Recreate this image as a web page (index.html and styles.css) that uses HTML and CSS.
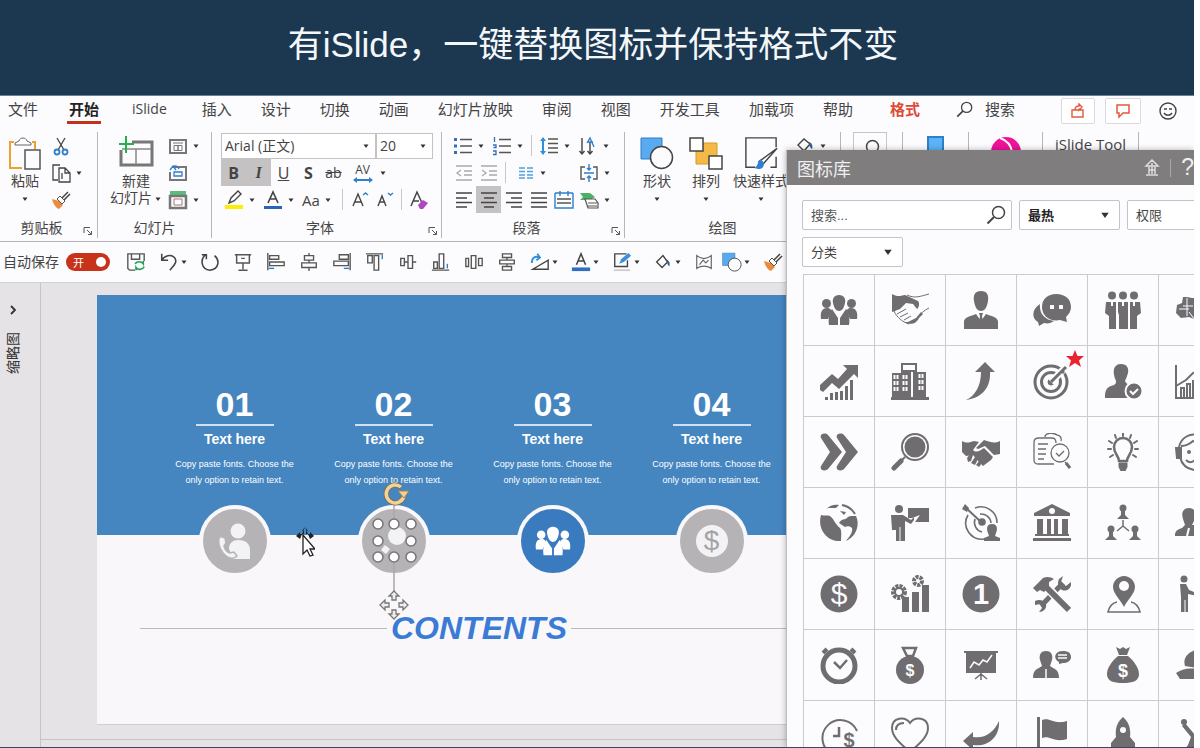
FILE: index.html
```html
<!DOCTYPE html>
<html lang="zh-CN">
<head>
<meta charset="utf-8">
<title>iSlide 图标库</title>
<link rel="stylesheet" href="styles.css">
</head>
<body>
<svg class="sprite" aria-hidden="true">
  <symbol id="caret" viewBox="0 0 8 8"><path d="M1.5 2.5h5L4 6z" fill="#333"/></symbol>
  <symbol id="launcher" viewBox="0 0 10 10"><path d="M1 7V1.500h6M4 4l4 4M8.500 5v3.500H5" fill="none" stroke="#555"/></symbol>
  <symbol id="lens" viewBox="0 0 20 20"><circle cx="12.500" cy="7.500" r="6" fill="none" stroke="currentColor" stroke-width="1.500"/><path d="M8 12l-6.500 6.500" stroke="currentColor" stroke-width="2"/></symbol>
  <symbol id="brush" viewBox="0 0 20 20"><path d="M1 9l7 2 4 4-4 4c-3-1-6-5-7-10z" fill="#ee8a3c"/><path d="M6 9l3-3 5 5-3 3z" fill="#fff" stroke="#555"/><path d="M11 8l6-6M13 10l6-6" stroke="#444" stroke-width="1.500"/></symbol>
  <symbol id="people" viewBox="0 0 38 38"><g fill="currentColor"><circle cx="6.500" cy="12.500" r="4.500"/><circle cx="31.500" cy="12.500" r="4.500"/><path d="M1 28c-1-7 1-11 6-11 3 0 5 2 4 4l-3 7zM37 28c1-7-1-11-6-11-3 0-5 2-4 4l3 7z"/><path d="M19 4c5 0 7 4 6 8-1 5-3 8-6 8s-5-3-6-8c-1-4 1-8 6-8z"/><path d="M12 18l6 9v7H9c-1-6 0-12 3-16zM26 18l-6 9v7h9c1-6 0-12-3-16z"/></g></symbol>
  <symbol id="shapes" viewBox="0 0 34 34"><path d="M1 2h21v21H1z" fill="#5aaaf0" stroke="#2f7fc9"/><circle cx="21.500" cy="21.500" r="11" fill="#fcfbfd" stroke="#444" stroke-width="1.500"/></symbol>
  <symbol id="bag" viewBox="0 0 38 38"><path d="M12 1l4 2 3-2 3 2 4-2-3 8h-8zM14 10h10c6 5 11 12 11 18 0 7-6 9-16 9S3 35 3 28c0-6 5-13 11-18z" fill="currentColor"/><path d="M14 9.500h10" stroke="#fcfbfe"/><text x="19" y="31" font-size="18" font-weight="700" text-anchor="middle" fill="#fcfbfe">$</text></symbol>
</svg>

<div class="frame">
  <header class="banner"><h1>有iSlide，一键替换图标并保持格式不变</h1></header>

  <div class="tabs">
    <nav class="tab-list">
      <button class="tab">文件</button>
      <button class="tab tab-active">开始</button>
      <button class="tab tab-latin">iSlide</button>
      <button class="tab">插入</button>
      <button class="tab">设计</button>
      <button class="tab">切换</button>
      <button class="tab">动画</button>
      <button class="tab">幻灯片放映</button>
      <button class="tab">审阅</button>
      <button class="tab">视图</button>
      <button class="tab">开发工具</button>
      <button class="tab">加载项</button>
      <button class="tab">帮助</button>
      <button class="tab tab-context">格式</button>
    </nav>
    <label class="tell-me"><svg width="17" height="17"><use href="#lens"/></svg><input type="text" placeholder="搜索" aria-label="搜索"></label>
    <div class="tab-tools">
      <button class="tool-box" aria-label="共享"><svg width="16" height="16" viewBox="0 0 16 16" fill="none" stroke="#e2583e" stroke-width="1.400"><path d="M2 7h11v7H2zM5 7c0-3 1-4 4-4V1l3 3-3 3V5.500"/></svg></button>
      <button class="tool-box tool-wide" aria-label="批注"><svg width="16" height="16" viewBox="0 0 16 16" fill="none" stroke="#e2583e" stroke-width="1.500"><path d="M2 2h12v8H8l-4 4v-4H2z"/></svg></button>
      <button class="smile" aria-label="反馈"><svg width="18" height="18" viewBox="0 0 18 18" fill="none" stroke="#444" stroke-width="1.400"><circle cx="9" cy="9" r="8"/><path d="M5 7h3M10 7h3M5 11c2 3 6 3 8 0"/></svg></button>
    </div>
  </div>

  <div class="ribbon">
    <section class="group g-clip">
      <div class="group-body">
        <button class="big big-paste"><svg width="34" height="34" viewBox="0 0 34 34" fill="none"><path d="M6 6H2v26h12M24 6h3v7" stroke="#f0a030" stroke-width="2"/><path d="M7 7l4-2c1-4 7-4 8 0l4 2v2H7z" stroke="#666" fill="#fff"/><path d="M17 14h15v19H17z" stroke="#555" stroke-width="1.500" fill="#fcfbfd"/></svg><span>粘贴</span><svg class="caret"><use href="#caret"/></svg></button>
        <div class="stack">
          <button class="small" aria-label="剪切"><svg viewBox="0 0 20 20" fill="none"><path d="M6 2l7 12M14 2L7 14" stroke="#444" stroke-width="1.300"/><circle cx="6" cy="16" r="2.500" stroke="#2f7fc9" stroke-width="1.800"/><circle cx="14" cy="16" r="2.500" stroke="#2f7fc9" stroke-width="1.800"/></svg></button>
          <button class="small" aria-label="复制"><svg viewBox="0 0 20 20" fill="none" stroke="#444" stroke-width="1.300"><path d="M7 17H2V2h7M8 5h6l5 5v9H8zM14 5v5h5M11 10v6"/></svg><svg class="caret"><use href="#caret"/></svg></button>
          <button class="small" aria-label="格式刷"><svg><use href="#brush"/></svg></button>
        </div>
      </div>
      <div class="group-foot"><span>剪贴板</span><svg class="launcher"><use href="#launcher"/></svg></div>
    </section>

    <section class="group g-slide">
      <div class="group-body">
        <button class="big big-new"><svg width="36" height="34" viewBox="0 0 36 34" fill="none"><path d="M14 6h20v23H3V14" stroke="#777" stroke-width="3"/><path d="M4 13h29M18 13v15" stroke="#888" stroke-width="1.500"/><path d="M8 0v17M1 8h15" stroke="#22b14c" stroke-width="2"/></svg><span>新建</span><span class="big-line">幻灯片<svg class="caret"><use href="#caret"/></svg></span></button>
        <div class="stack">
          <button class="small" aria-label="版式"><svg viewBox="0 0 20 20" fill="none"><path d="M2 4h16v13H2z" stroke="#777" stroke-width="2"/><path d="M5 7h10M6 9.500h4v5H6zM10 9.500h4v5h-4z" stroke="#777"/></svg><svg class="caret"><use href="#caret"/></svg></button>
          <button class="small" aria-label="重置"><svg viewBox="0 0 20 20" fill="none"><path d="M4 4h14v13H2V9" stroke="#777" stroke-width="2"/><path d="M6 13V9h8v4zM2 7l3-4 3 4M5 4c2-2 5-1 6 2" stroke="#2f7fc9" stroke-width="1.300"/></svg></button>
          <button class="small" aria-label="节"><svg viewBox="0 0 20 20" fill="none"><path d="M2 1h16v4H2z" fill="#5bbd7c"/><path d="M2 6h16v12H2z" stroke="#777" stroke-width="2.500"/><path d="M6 9h8v6H6z" stroke="#a76" fill="#fff"/></svg><svg class="caret"><use href="#caret"/></svg></button>
        </div>
      </div>
      <div class="group-foot"><span>幻灯片</span></div>
    </section>

    <section class="group g-font">
      <div class="group-body rows">
        <div class="row combo-row">
          <label class="combo combo-name"><select aria-label="字体"><option>Arial (正文)</option></select><svg class="caret"><use href="#caret"/></svg></label>
          <label class="combo combo-size"><select aria-label="字号"><option>20</option></select><svg class="caret"><use href="#caret"/></svg></label>
        </div>
        <div class="row">
          <button class="cell pressed"><b>B</b></button>
          <button class="cell pressed"><i class="serif">I</i></button>
          <button class="cell"><u>U</u></button>
          <button class="cell"><b>S</b></button>
          <button class="cell"><s>ab</s></button>
          <button class="cell spacing" aria-label="字符间距"><span>AV</span><svg width="20" height="6" viewBox="0 0 20 6"><path d="M0 3l4-3v2h12V0l4 3-4 3V4H4v2z" fill="#2f7fc9"/></svg></button><svg class="caret"><use href="#caret"/></svg>
        </div>
        <div class="row">
          <button class="cell cell-dd" aria-label="突出显示"><svg viewBox="0 0 20 20"><path d="M1 15h18v4H1z" fill="#ffee00"/><path d="M5 13l2-5 7-7 3 3-7 7-5 2z" fill="#fff" stroke="#444" stroke-width="1.400"/></svg><svg class="caret"><use href="#caret"/></svg></button>
          <button class="cell cell-dd" aria-label="字体颜色"><svg viewBox="0 0 20 20"><path d="M1 16h18v3H1z" fill="#2b63b8"/><path d="M5 13l5-11 5 11M7 9h6" fill="none" stroke="#444" stroke-width="1.600"/></svg><svg class="caret"><use href="#caret"/></svg></button>
          <button class="cell cell-dd"><span>Aa</span><svg class="caret"><use href="#caret"/></svg></button>
          <i class="rule"></i>
          <button class="cell" aria-label="增大字号"><svg viewBox="0 0 20 20" fill="none"><path d="M3 16L8 4l5 12M5 12h6" stroke="#444" stroke-width="1.400"/><path d="M13 5l2.500-2L18 5" stroke="#2f7fc9" stroke-width="1.400"/></svg></button>
          <button class="cell" aria-label="减小字号"><svg viewBox="0 0 20 20" fill="none"><path d="M3 16l4-10 4 10M5 12h5" stroke="#444" stroke-width="1.400"/><path d="M13 3l2.500 2L18 3" stroke="#2f7fc9" stroke-width="1.400"/></svg></button>
          <i class="rule"></i>
          <button class="cell" aria-label="清除格式"><svg viewBox="0 0 20 20" fill="none"><path d="M2 16L8 2l5 11M4 11h6" stroke="#444" stroke-width="1.500"/><path d="M9 15l5-5 5 3-5 6h-3z" fill="#b146c2"/></svg></button>
        </div>
      </div>
      <div class="group-foot"><span>字体</span><svg class="launcher"><use href="#launcher"/></svg></div>
    </section>

    <section class="group g-para">
      <div class="group-body rows">
        <div class="row row-gap">
          <button class="small" aria-label="项目符号"><svg viewBox="0 0 20 20"><path d="M1 2h3v3H1zM1 8.500h3v3H1zM1 15h3v3H1z" fill="#2f6fc0"/><path d="M7 3.500h12M7 10h12M7 16.500h12" stroke="#555" stroke-width="1.400"/></svg><svg class="caret"><use href="#caret"/></svg></button>
          <button class="small" aria-label="编号"><svg viewBox="0 0 20 20"><path d="M2.500 1v5M1 9h3v2.500H1.500M1 15h3v3.500H1" fill="none" stroke="#2f6fc0" stroke-width="1.300"/><path d="M7 3.500h12M7 10h12M7 16.500h12" stroke="#555" stroke-width="1.400"/></svg><svg class="caret"><use href="#caret"/></svg></button>
          <i class="rule"></i>
          <button class="small" aria-label="行距"><svg viewBox="0 0 20 20"><path d="M4 1L1 5h2v10H1l3 4 3-4H5V5h2z" fill="#2f8fd8"/><path d="M9 3h10M9 7.500h10M9 12h10M9 16.500h10" stroke="#555" stroke-width="1.300"/></svg><svg class="caret"><use href="#caret"/></svg></button>
          <button class="small" aria-label="文字方向"><svg viewBox="0 0 20 20" fill="none"><path d="M4 2v16M1.500 15L4 18l2.500-3M12 6v12M9.500 15l2.500 3 2.500-3" stroke="#444" stroke-width="1.400"/><path d="M9 7l3-5 4 9M10 6h5" stroke="#2f7fc9" stroke-width="1.300"/></svg><svg class="caret"><use href="#caret"/></svg></button>
        </div>
        <div class="row">
          <button class="cell" aria-label="减少缩进"><svg viewBox="0 0 20 20" fill="none" stroke="#aaa" stroke-width="1.300"><path d="M2 3h16M10 8h8M10 12h8M2 17h16M7 7l-4 3 4 3"/></svg></button>
          <button class="cell" aria-label="增加缩进"><svg viewBox="0 0 20 20" fill="none" stroke="#aaa" stroke-width="1.300"><path d="M2 3h16M10 8h8M10 12h8M2 17h16M3 7l4 3-4 3"/></svg></button>
          <i class="rule"></i>
          <button class="small columns" aria-label="分栏"><svg viewBox="0 0 20 20" stroke="#4da3dc" stroke-width="1.400"><path d="M4 5h6M4 8.500h6M4 12h6M4 15h6M12 5h6M12 8.500h6M12 12h6M12 15h6"/></svg><svg class="caret"><use href="#caret"/></svg></button>
          <button class="small last" aria-label="对齐文本"><svg viewBox="0 0 20 20" fill="none"><path d="M6 4H2v12h4M14 4h4v12h-4" stroke="#555" stroke-width="1.400"/><path d="M5 10h10M10 1v6M10 19v-6M8 5l2 2 2-2M8 15l2-2 2 2" stroke="#2f7fc9" stroke-width="1.400"/></svg><svg class="caret"><use href="#caret"/></svg></button>
        </div>
        <div class="row">
          <button class="cell" aria-label="左对齐"><svg viewBox="0 0 20 20" stroke="#444" stroke-width="1.400"><path d="M2 3h16M2 8h11M2 12.500h16M2 17h11"/></svg></button>
          <button class="cell pressed" aria-label="居中"><svg viewBox="0 0 20 20" stroke="#444" stroke-width="1.400"><path d="M2 3h16M5 8h10M2 12.500h16M5 17h10"/></svg></button>
          <button class="cell" aria-label="右对齐"><svg viewBox="0 0 20 20" stroke="#444" stroke-width="1.400"><path d="M2 3h16M7 8h11M2 12.500h16M7 17h11"/></svg></button>
          <button class="cell" aria-label="两端对齐"><svg viewBox="0 0 20 20" stroke="#444" stroke-width="1.400"><path d="M2 3h16M2 8h16M2 12.500h16M2 17h16"/></svg></button>
          <button class="cell" aria-label="分散对齐"><svg viewBox="0 0 20 20" fill="none"><path d="M1 3h18M6 1v5M14 1v5M1 3v15h18V3" stroke="#2f7fc9" stroke-width="1.400"/><path d="M3 9h14M3 13h14" stroke="#555" stroke-width="1.300"/></svg></button>
          <button class="small last" aria-label="转换为 SmartArt"><svg viewBox="0 0 20 20" fill="none"><path d="M1 3h10l5 4-5 3H1l3-3z" fill="#4cb06a"/><path d="M6 9h10l3 4v5H9zM9 13h9M9 16h9" stroke="#555" fill="#fff" stroke-width="1.200"/></svg><svg class="caret"><use href="#caret"/></svg></button>
        </div>
      </div>
      <div class="group-foot"><span>段落</span><svg class="launcher"><use href="#launcher"/></svg></div>
    </section>

    <section class="group g-draw">
      <div class="group-body">
        <button class="big big-shape"><svg width="34" height="34"><use href="#shapes"/></svg><span>形状</span><svg class="caret"><use href="#caret"/></svg></button>
        <button class="big big-shape"><svg width="34" height="34" viewBox="0 0 34 34"><path d="M7 7h21v21H7z" fill="#f5b947" stroke="#d99a26"/><path d="M1 2h13v13H1zM20 20h13v13H20z" fill="#fff" stroke="#444" stroke-width="1.500"/></svg><span>排列</span><svg class="caret"><use href="#caret"/></svg></button>
        <button class="big big-style"><svg width="36" height="34" viewBox="0 0 36 36"><path d="M34 12V2H2v31h10M34 22v11h-6" fill="none" stroke="#444" stroke-width="1.500"/><path d="M35 13L20 30l-4-3z" fill="#fff" stroke="#444" stroke-width="1.500"/><path d="M17 25c4 1 5 5 3 8-3 3-7 2-9 1 4-2 3-6 6-9z" fill="#2f80d0"/></svg><span>快速样式</span><svg class="caret"><use href="#caret"/></svg></button>
        <div class="stack"><button class="small" aria-label="形状填充"><svg viewBox="0 0 20 20"><path d="M3 9l6-6 6 5-6 7z" fill="#fff" stroke="#444" stroke-width="1.400"/><path d="M14 6c3 1 4 4 3 7-2-1-3-4-3-7z" fill="#2f6090"/></svg><svg class="caret"><use href="#caret"/></svg></button></div>
      </div>
      <div class="group-foot"><span>绘图</span></div>
    </section>
    <section class="group g-a"><button class="editing" aria-label="编辑"><svg width="20" height="20"><use href="#lens"/></svg></button></section>
    <section class="group g-b"><svg width="18" height="18" viewBox="0 0 18 18"><path d="M1 1h15v17H1z" fill="#5ab4f5" stroke="#2f7fc9" stroke-width="2"/></svg></section>
    <section class="group g-c"><svg width="32" height="32" viewBox="0 0 32 32"><circle cx="16" cy="16" r="15" fill="#f0129a"/><path d="M10 2c6 2 11 7 12 14" fill="none" stroke="#fff" stroke-width="2"/></svg></section>
    <section class="group g-d"><span>iSlide Tool</span></section>
  </div>

  <div class="quick">
    <span id="autosave">自动保存</span>
    <label class="switch"><span>开</span><input type="checkbox" role="switch" checked aria-labelledby="autosave"></label>
    <button class="q" aria-label="保存"><svg viewBox="0 0 22 22" fill="none"><path d="M10 20H4l-2-2V2h18v8M6 2v6h9V2" stroke="#555" stroke-width="1.500"/><path d="M10 13c2-3 7-3 9 0v-3M20 16c-2 4-7 4-9 1v3" stroke="#22a352" stroke-width="1.800"/></svg></button>
    <button class="q" aria-label="撤消"><svg viewBox="0 0 22 22" fill="none" stroke="#444" stroke-width="1.700"><path d="M3 2v7h7M3 9c3-5 10-7 14-3 4 5-1 9-5 14"/></svg><svg class="caret"><use href="#caret"/></svg></button>
    <button class="q" aria-label="恢复"><svg viewBox="0 0 22 22" fill="none" stroke="#444" stroke-width="1.700"><path d="M6 3C0 8 1 19 11 20c10-1 11-11 5-16M2 3h5v5"/></svg></button>
    <button class="q" aria-label="放映"><svg viewBox="0 0 22 22" fill="none" stroke="#555" stroke-width="1.600"><path d="M2 3h18M4 3v9h14V3M11 12v7M6 20h10M9 7h4"/></svg></button>
    <button class="q" aria-label="左对齐对象"><svg viewBox="0 0 22 22" fill="none" stroke="#555" stroke-width="1.500"><path d="M2 1v19M4 4h10v4H4zM4 11h16v4H4z"/><path d="M3 18h6" stroke="#2f7fc9"/></svg></button>
    <button class="q" aria-label="水平居中"><svg viewBox="0 0 22 22" fill="none" stroke="#555" stroke-width="1.500"><path d="M11 1v3M11 9v3M11 17v4M6 4h10v5H6zM3 12h16v5H3z"/></svg></button>
    <button class="q" aria-label="右对齐对象"><svg viewBox="0 0 22 22" fill="none" stroke="#555" stroke-width="1.500"><path d="M20 1v19M8 3h10v5H8zM2 10h16v5H2z"/><path d="M13 18h6" stroke="#2f7fc9"/></svg></button>
    <button class="q" aria-label="顶端对齐"><svg viewBox="0 0 22 22" fill="none" stroke="#555" stroke-width="1.500"><path d="M1 2h19M3 4h5v8H3zM10 4h5v16h-5z"/><path d="M19 3v5" stroke="#2f7fc9"/></svg></button>
    <button class="q" aria-label="垂直居中"><svg viewBox="0 0 22 22" fill="none" stroke="#555" stroke-width="1.500"><path d="M3 7h4v8H3zM11 4h5v14h-5zM16 11h4M7 11h4"/></svg></button>
    <button class="q" aria-label="底端对齐"><svg viewBox="0 0 22 22" fill="none" stroke="#555" stroke-width="1.500"><path d="M1 20h19M3 11h4v7H3zM9 2h5v16H9z"/><path d="M18 13v5" stroke="#2f7fc9"/></svg></button>
    <button class="q" aria-label="横向分布"><svg viewBox="0 0 22 22" fill="none" stroke="#555" stroke-width="1.500"><path d="M2 7h3v9H2zM8 4h5v14H8zM16 7h4v8h-4z"/></svg></button>
    <button class="q" aria-label="纵向分布"><svg viewBox="0 0 22 22" fill="none" stroke="#555" stroke-width="1.500"><path d="M6 2h10v4H6zM3 9h16v4H3zM6 16h10v4H6zM11 6v3M11 13v3"/></svg></button>
    <button class="q" aria-label="旋转"><svg viewBox="0 0 22 22" fill="none"><path d="M20 9v10H3z" stroke="#444" stroke-width="1.500"/><path d="M2 12c0-6 4-8 8-6M8 2l3 4-4 3" stroke="#2f8fd8" stroke-width="2"/></svg><svg class="caret"><use href="#caret"/></svg></button>
    <button class="q" aria-label="字体颜色"><svg viewBox="0 0 22 22"><path d="M1 17h20v4H1z" fill="#2f6fc0"/><path d="M6 14l5-12 5 12M8 10h6" fill="none" stroke="#444" stroke-width="1.700"/></svg><svg class="caret"><use href="#caret"/></svg></button>
    <button class="q" aria-label="形状轮廓"><svg viewBox="0 0 22 22" fill="none"><path d="M16 2H3v14h14V9" stroke="#444" stroke-width="1.500"/><path d="M8 13l2-5 8-7 3 3-8 7z" fill="#3d8fdc"/><path d="M2 19h18v2H2z" fill="#ccc"/></svg><svg class="caret"><use href="#caret"/></svg></button>
    <button class="q" aria-label="形状填充"><svg viewBox="0 0 22 22"><path d="M4 11l7-7 5 7-6 6z" fill="#fff" stroke="#444" stroke-width="1.500"/><path d="M15 8c3 2 4 4 3 8-2-2-3-4-3-8z" fill="#2f6090"/></svg><svg class="caret"><use href="#caret"/></svg></button>
    <button class="q q-tight" aria-label="编辑顶点"><svg viewBox="0 0 22 22" fill="none" stroke="#666" stroke-width="1.300"><path d="M3 3v16M19 3v16M3 4c5 4 11 4 16 0M3 18c5-3 11-3 16 0M6 14l4-5 3 3 3-3"/></svg></button>
    <button class="q" aria-label="形状"><svg><use href="#shapes"/></svg><svg class="caret"><use href="#caret"/></svg></button>
    <button class="q" aria-label="格式刷"><svg><use href="#brush"/></svg></button>
  </div>

  <main class="work">
    <aside class="thumbs"><button class="expand" aria-label="展开"><svg width="8" height="10" viewBox="0 0 8 10"><path d="M2 1l4 4-4 4" fill="none" stroke="#333" stroke-width="1.800"/></svg></button><span class="thumbs-name">缩略图</span></aside>
    <div class="canvas">
      <article class="slide">
        <div class="hero">
          <section class="item"><h2>01</h2><h3>Text here</h3><p>Copy paste fonts. Choose the only option to retain text.</p>
            <div class="badge"><svg width="38" height="38" viewBox="0 0 38 38" fill="#f3f2f5"><circle cx="22" cy="9" r="7.500"/><path d="M14 37c5-1 1-5-1-10 0-6 4-9 9-9 8 0 12 4 12 10v9z"/><path d="M4 14l5 2 1 5-2 3c1 4 3 6 6 7l4-1 3 4c-4 4-10 2-14-3C3 26 1 19 4 14z" stroke="#b5b3b6" stroke-width="1.500"/></svg></div></section>
          <section class="item"><h2>02</h2><h3>Text here</h3><p>Copy paste fonts. Choose the only option to retain text.</p>
            <div class="badge badge-picked">
              <svg class="glyph" width="38" height="38" viewBox="0 0 38 38" fill="#f3f2f5"><circle cx="22" cy="14" r="9"/><path d="M10 23l5 4-4 5-5-4z"/></svg>
              <svg class="handles" width="60" height="150" viewBox="0 0 60 150" fill="none">
                <path d="M30 24v14M30 82v34" stroke="#aaa8ab" stroke-width="1.500"/>
                <path d="M40 15a9 9 0 1 1-3-9" stroke="#7a6a50" stroke-width="5"/><path d="M40 15a9 9 0 1 1-3-9" stroke="#f3d294" stroke-width="3.500"/><path d="M34 10h11l-5 7z" fill="#f3d294" stroke="#a08060"/>
                <g fill="#fff" stroke="#777578" stroke-width="1.500"><circle cx="14" cy="43" r="5"/><circle cx="30" cy="43" r="5"/><circle cx="47" cy="43" r="5"/><circle cx="14" cy="60" r="5"/><circle cx="47" cy="60" r="5"/><circle cx="14" cy="76" r="5"/><circle cx="30" cy="76" r="5"/><circle cx="47" cy="76" r="5"/></g>
                <g fill="#eee" stroke="#777" stroke-width="1.300"><path d="M30 110l5 5h-3v4h-4v-4h-3z"/><path d="M30 138l5-5h-3v-4h-4v4h-3z"/><path d="M16 124l5-5v3h4v4h-4v3z"/><path d="M44 124l-5-5v3h-4v4h4v3z"/></g>
              </svg>
            </div></section>
          <section class="item"><h2>03</h2><h3>Text here</h3><p>Copy paste fonts. Choose the only option to retain text.</p>
            <div class="badge badge-blue"><svg width="36" height="36"><use href="#people"/></svg></div></section>
          <section class="item"><h2>04</h2><h3>Text here</h3><p>Copy paste fonts. Choose the only option to retain text.</p>
            <div class="badge"><span class="coin">$</span></div></section>
          <svg class="pointer" width="20" height="32" viewBox="0 0 20 32"><path d="M10 1l-3 4h2v3H5V6L1 10l4 3M10 1l3 4h-2v3h4V6l4 4-4 3" fill="#222"/><path d="M8 9v19l4-4 3 6 3-1-3-6h5z" fill="#fff" stroke="#222" stroke-width="1.300"/></svg>
        </div>
        <div class="contents"><strong>CONTENTS</strong></div>
      </article>
    </div>
  </main>

  <aside class="library">
    <div class="lib-title"><h2>图标库</h2><div class="lib-tools"><button aria-label="置顶"><svg width="16" height="18" viewBox="0 0 16 18" fill="none" stroke="#dddcdd" stroke-width="1.500"><path d="M8 1l6 6H2zM5 7v8M11 7v8M5 11h6M2 16h12M8 4v11"/></svg></button><i></i><button class="help">?</button></div></div>
    <div class="filters">
      <label class="field search"><input type="text" placeholder="搜索..." aria-label="搜索图标"><svg width="20" height="20"><use href="#lens"/></svg></label>
      <label class="field pick"><select class="strong" aria-label="排序"><option>最热</option></select><svg class="arrow"><use href="#caret"/></svg></label>
      <label class="field pick"><select aria-label="权限"><option>权限</option></select><svg class="arrow"><use href="#caret"/></svg></label>
    </div>
    <div class="filters"><label class="field pick"><select aria-label="分类"><option>分类</option></select><svg class="arrow"><use href="#caret"/></svg></label></div>

    <div class="icons">
      <button aria-label="团队"><svg><use href="#people"/></svg></button>
      <button aria-label="交接"><svg viewBox="0 0 38 38"><path d="M1 3c5 3 8 2 13 1l13 6c2 2 1 7-1 8l-4-5-7-1-6 6-8 3z" fill="currentColor"/><path d="M16 4c8 4 14 1 22-1M38 17c-6 3-7 5-11 9" fill="none" stroke="currentColor"/><path d="M3 20l9-6M3 20c3 7 9 11 15 13M6 23l9-5M9 26l8-4M13 29l7-4" fill="none" stroke="currentColor"/><path d="M13 31c7 4 13 1 15-4l4-4-2-2-5 6-8 4z" fill="currentColor"/></svg></button>
      <button aria-label="商务人士"><svg viewBox="0 0 38 38" fill="currentColor"><path d="M19 0c6 0 8 4 7 10-1 6-3 10-7 10s-6-4-7-10c-1-6 1-10 7-10zM2 38V30c1-4 7-5 12-7l5 7 5-7c5 2 11 3 12 7v8z"/><path d="M17 22h4l-1 3 1 6-2 3-2-3 1-6z"/></svg></button>
      <button aria-label="聊天"><svg viewBox="0 0 38 38" fill="currentColor"><path d="M7 13C-1 18-2 27 5 31l1 4 5-3c4 1 7 0 10-2C12 29 6 23 7 13z"/><path d="M23 3c9 0 15 5 15 13 0 4-2 7-5 10l1 5-7-2c-10 2-18-4-18-13C9 8 15 3 23 3z"/><path d="M17 14h4v4h-4zM26 14h4v4h-4z" fill="#fcfbfe"/></svg></button>
      <button aria-label="三人"><svg viewBox="0 0 38 38" fill="currentColor"><circle cx="8" cy="4.500" r="4"/><circle cx="19" cy="4.500" r="4"/><circle cx="30" cy="4.500" r="4"/><path d="M2 11h10v27H5V25l-4-3zM14 11h10v27h-9V24l-1-3zM26 11h10l1 11-4 3v13h-7z"/><path d="M8 10v5M19 10v5M30 10v5" stroke="#fcfbfe" stroke-width="2"/></svg></button>
      <button aria-label="城市"><svg viewBox="0 0 38 38" fill="currentColor"><path d="M2 14l5-2 1-6h4l5 1h20v28L14 26l-8 1-5-5z"/><path d="M4 18h10M12 7v18M8 15h10M14 21l6 8" stroke="#fcfbfe"/></svg></button>

      <button aria-label="增长"><svg viewBox="0 0 38 38" fill="currentColor"><path d="M0 23l12-11 6 5 9-10-4-4h15v13l-4-4-15 15-7-6-9 9-3-2z"/><path d="M5 35h3v3H5zM10 31h3v7h-3zM15 30h3v8h-3zM20 29h3v9h-3zM25 24h3v14h-3zM30 18h3v20h-3z"/></svg></button>
      <button aria-label="大楼"><svg viewBox="0 0 38 38"><path d="M1 11h9V1h16v9h9v25h3v3H0v-3h1z" fill="currentColor"/><path d="M12 3h12v5H12zM20 10h2v25h-2z" fill="#fcfbfe"/><path d="M5 13v18M14 13v18M30 12v18" stroke="#fcfbfe" stroke-width="5" stroke-dasharray="4 2"/><path d="M5 11v22M14 11v22M30 11v22" stroke="currentColor"/></svg></button>
      <button aria-label="上升箭头"><svg viewBox="0 0 38 38"><path d="M23 0l10 10h-5c1 15-8 26-24 28 9-4 15-14 15-28h-6z" fill="currentColor"/></svg></button>
      <button aria-label="目标" class="marked"><svg viewBox="0 0 38 38" fill="none" stroke="currentColor"><circle cx="18" cy="20" r="16" stroke-width="3"/><circle cx="18" cy="20" r="9.500" stroke-width="3"/><circle cx="18" cy="20" r="3" fill="currentColor"/><path d="M18 20L34 4" stroke="#fcfbfe" stroke-width="7"/><path d="M18 20L33 5M28 8l3 3" stroke-width="3"/></svg><svg class="star" viewBox="0 0 18 18"><path d="M9 0l2.500 6H18l-5 4.500L15 17l-6-4-6 4 2-6.500L0 6h6.500z" fill="#ea2330"/></svg></button>
      <button aria-label="认证用户"><svg viewBox="0 0 38 38" fill="currentColor"><path d="M17 2c6 0 8 4 7 9-1 3-2 6-3 8 1 3 5 4 8 6l-5 11H1c0-7 1-10 6-12 4-1 5-2 5-5-4-9-3-17 5-17z"/><circle cx="30" cy="29" r="8.500" stroke="#fcfbfe" stroke-width="2"/><path d="M26 29l3 3 5-5" stroke="#fcfbfe" stroke-width="2" fill="none"/></svg></button>
      <button aria-label="图表"><svg viewBox="0 0 38 38" fill="none" stroke="currentColor" stroke-width="2"><path d="M1 3v33h37M1 24l10-6 7-7 8-4M6 35V26h3v9M12 35V22h3v13M18 35V19h3v16"/></svg></button>

      <button aria-label="前进"><svg viewBox="0 0 38 38" fill="currentColor"><path d="M1 5c-2-4 4-6 7-3l14 17L8 36c-3 3-9 1-7-3l9-14z"/><path d="M17 5c-2-4 4-6 7-3l14 17-14 17c-3 3-9 1-7-3l9-14z"/></svg></button>
      <button aria-label="放大镜"><svg viewBox="0 0 38 38"><circle cx="24" cy="14" r="13" fill="none" stroke="currentColor" stroke-width="2"/><circle cx="24" cy="14" r="10.500" fill="currentColor"/><path d="M14 24l-3 3" stroke="currentColor" stroke-width="2"/><path d="M10 28l-7 7" stroke="currentColor" stroke-width="5" stroke-linecap="round"/></svg></button>
      <button aria-label="握手"><svg viewBox="0 0 38 38" fill="currentColor"><path d="M0 8c5 3 8 1 12 0l5 1-6 8c3 3 7 1 11-2l9 9-2 3-8 6-4-4-6-7-7 1-4-4zM38 8v13l-6 1-9-9-7 3-2-1 8-8c7 2 10 4 16 1z"/><path d="M5 25l3-4 3 1-2 6-3 1zM9 30l4-6 3 2-3 6zM14 32l3-4 3 2-3 4z"/></svg></button>
      <button aria-label="文档审核"><svg viewBox="0 0 38 38" fill="none" stroke="currentColor" stroke-width="1.300"><path d="M21 31H5c-3 0-4-2-4-4V9c0-3 2-4 5-4h13c3 0 4 2 4 5M12 4c0-4 8-5 12-2 2 0 5 2 4 6M5 11h10M5 16h8M5 21h8M5 26h6"/><circle cx="27" cy="20" r="9"/><path d="M23 20l3 3 5-5M32 29l5 6"/><path d="M33 30l4 5" stroke-width="3"/></svg></button>
      <button aria-label="灯泡"><svg viewBox="0 0 38 38" fill="none" stroke="currentColor"><path d="M15 28c0-5-5-7-5-14 0-5 4-9 9-9s9 4 9 9c0 7-5 9-5 14z" stroke-width="2.500"/><path d="M15 30h8v4l-2 4h-4l-2-4z" fill="currentColor"/><path d="M19 0v3M11 2l1 3M27 2l-1 3M5 8l3 2M33 8l-3 2M4 16h3M31 16h3M6 24l3-2M32 24l-3-2" stroke-width="2" stroke-linecap="round"/></svg></button>
      <button aria-label="客服"><svg viewBox="0 0 38 38" fill="none" stroke="currentColor" stroke-width="2"><path d="M4 14C6 4 16 0 22 2M5 24c2 9 8 12 14 13M6 13c2 0 8-1 12-5l12 8"/><path d="M1 15h5v10H2z" fill="currentColor"/><circle cx="14" cy="19" r="1"/><path d="M11 27c3 3 6 3 9 0"/></svg></button>

      <button aria-label="地球"><svg viewBox="0 0 38 38"><path d="M1 11c3 1 7 0 9 1 4 3 5 8 10 12 2 3 1 7 1 13C7 38-3 25 1 11zM36 12c5 11-2 22-10 25 3-4 7-8 6-13-2-2-5-2-7-1l-6-4c3-5 6-3 8-5s3-2 9-2z" fill="currentColor"/><path d="M6 5c4-4 9-5 13-4l-3 3h-8zM20 7l6 1-2 3" fill="currentColor"/><path d="M22 1c6 1 10 4 13 9" fill="none" stroke="currentColor" stroke-width="2"/></svg></button>
      <button aria-label="演讲"><svg viewBox="0 0 38 38" fill="currentColor"><circle cx="8" cy="5" r="4"/><path d="M0 11h12l8 5 3-3v3l-3 4-6-3v20H5V26H1z"/><path d="M17 4h21v14H24l5-7-8 3h-4z"/><path d="M9 23v14" stroke="#fcfbfe"/></svg></button>
      <button aria-label="目标客户"><svg viewBox="0 0 38 38" fill="none" stroke="currentColor" stroke-width="1.600"><path d="M22 35A16 16 0 0 1 6 11M13 4a16 16 0 0 1 22 15"/><path d="M20 28a10 10 0 0 1-7-13M18 10a10 10 0 0 1 11 9"/><circle cx="20" cy="18" r="3" fill="currentColor"/><path d="M3 3l16 15" stroke-width="2"/><path d="M0 5l5 3 2-4-4-4zM30 20c5 0 6 4 4 9l-1 3 5 2v3H22v-3l5-2-1-3c-2-5-1-9 4-9z" fill="currentColor" stroke="none"/></svg></button>
      <button aria-label="银行"><svg viewBox="0 0 38 38" fill="currentColor"><path d="M19 0l18 9v3H1V9zM4 15h6v15H4zM14 15h4v15h-4zM21 15h4v15h-4zM29 15h6v15h-6zM2 30h34v2H2zM0 34h38v3H0z"/><circle cx="19" cy="7" r="3" fill="#fcfbfe"/></svg></button>
      <button aria-label="组织"><svg viewBox="0 0 38 38" fill="currentColor"><circle cx="19" cy="4" r="3.500"/><path d="M13 15l4-4V7h4v4l4 4z"/><circle cx="7" cy="25" r="3.500"/><path d="M1 36l4-4v-4h4v4l4 4z"/><circle cx="31" cy="25" r="3.500"/><path d="M25 36l4-4v-4h4v4l4 4z"/><path d="M19 16v6M19 22l-6 5M19 22l6 5" stroke="currentColor" stroke-width="1.500"/></svg></button>
      <button aria-label="用户"><svg viewBox="0 0 38 38" fill="currentColor"><path d="M14 4c6 0 8 6 6 11l-3 6h14v11H0c0-4 1-6 7-8l3-3-2-6C6 9 8 4 14 4z"/><path d="M14 24l-2 8" stroke="#fcfbfe" stroke-width="2"/></svg></button>

      <button aria-label="美元"><svg viewBox="0 0 38 38"><circle cx="19" cy="19" r="18.500" fill="currentColor"/><text x="19" y="29" font-size="30" text-anchor="middle" fill="#fcfbfe">$</text></svg></button>
      <button aria-label="齿轮图表"><svg viewBox="0 0 38 38" fill="currentColor"><path d="M11 22h7v15h-7zM21 17h7v20h-7zM31 10h7v27h-7z"/><circle cx="8" cy="17" r="6" fill="none" stroke="currentColor" stroke-width="4" stroke-dasharray="3 1"/><circle cx="8" cy="17" r="4" fill="none" stroke="currentColor" stroke-width="2"/><circle cx="27" cy="6" r="4" fill="none" stroke="currentColor" stroke-width="4" stroke-dasharray="3 1"/></svg></button>
      <button aria-label="第一"><svg viewBox="0 0 38 38"><circle cx="19" cy="19" r="18.500" fill="currentColor"/><text x="19" y="29" font-size="29" font-weight="700" text-anchor="middle" fill="#fcfbfe">1</text></svg></button>
      <button aria-label="工具"><svg viewBox="0 0 38 38"><path d="M8 31L30 8" stroke="currentColor" stroke-width="5"/><path d="M30 1l-2 6 5 4 5-4c1 6-4 10-9 8-4-2-5-7-3-11zM2 26c4-2 9-1 11 3 1 4-2 8-7 8l3-4-2-4-5 1z" fill="currentColor"/><path d="M11 9l25 27" stroke="#fcfbfe" stroke-width="9"/><path d="M11 10l25 25" stroke="currentColor" stroke-width="6"/><path d="M0 13l10-10c4-2 8-1 11 1l-5 3v5l-5 5-4-2-3 2z" fill="currentColor"/></svg></button>
      <button aria-label="位置"><svg viewBox="0 0 38 38"><path d="M20 1c6 0 11 5 11 11 0 7-8 13-11 20C17 25 9 19 9 12 9 6 14 1 20 1z" fill="currentColor"/><circle cx="20" cy="11" r="5" fill="#fcfbfe"/><path d="M13 27c-5 1-8 6-9 10h32c-1-4-4-9-9-10" fill="none" stroke="currentColor" stroke-width="1.600"/></svg></button>
      <button aria-label="人物"><svg viewBox="0 0 38 38" fill="currentColor"><circle cx="9" cy="4" r="3.500"/><path d="M5 9h6l3 6 8 3v3l-9-2v18H6V22z"/><path d="M10 25v12" stroke="#fcfbfe"/></svg></button>

      <button aria-label="闹钟"><svg viewBox="0 0 38 38" fill="none" stroke="currentColor"><circle cx="19" cy="20" r="16" stroke-width="5"/><path d="M14 16l6 6 7-8" stroke-width="2.500"/><path d="M3 7l4-4M35 7l-4-4" stroke-width="4"/></svg></button>
      <button aria-label="钱袋"><svg viewBox="0 0 38 38"><path d="M12 2h13l-3 8h-6z" fill="none" stroke="currentColor" stroke-width="2.500"/><circle cx="19" cy="24" r="14" fill="currentColor"/><text x="19" y="30" font-size="16" font-weight="700" text-anchor="middle" fill="#fcfbfe">$</text></svg></button>
      <button aria-label="演示板"><svg viewBox="0 0 38 38"><path d="M2 5h34v2h-2v20H4V7H2z" fill="currentColor"/><path d="M8 22l4-6 5 3 4-5 4 2 5-7" fill="none" stroke="#fcfbfe" stroke-width="1.500"/><path d="M19 27v7M19 28l-6 5M19 28l6 5" stroke="currentColor" stroke-width="1.500"/></svg></button>
      <button aria-label="咨询"><svg viewBox="0 0 38 38" fill="currentColor"><path d="M13 5c6 0 7 5 6 9l-2 6c4 3 9 3 9 12H0c0-9 5-9 9-12l-2-6C6 10 7 5 13 5zM30 5c5 0 8 2 8 6s-4 6-8 6l-4 1v-2c-6-3-5-11 4-11z"/><path d="M13 23v9M25 9h9M25 12h9" stroke="#fcfbfe" stroke-width="1.500"/></svg></button>
      <button aria-label="金钱袋"><svg><use href="#bag"/></svg></button>
      <button aria-label="火苗"><svg viewBox="0 0 38 38" fill="currentColor"><path d="M18 5c-7 3-10 9-8 15l12 2V3zM1 27c6-4 16-7 25-2v8H5z"/></svg></button>

      <button aria-label="时间金钱"><svg viewBox="0 0 38 38" fill="none" stroke="currentColor" stroke-width="2"><path d="M12 37A18 18 0 1 1 37 14"/><path d="M19 10v9h-6" stroke-width="2.500"/><text x="29" y="30" font-size="20" font-weight="700" text-anchor="middle" stroke="none" fill="currentColor">$</text></svg></button>
      <button aria-label="爱心"><svg viewBox="0 0 38 38" fill="none" stroke="currentColor" stroke-width="2"><path d="M19 35C10 27 1 20 1 11 1 0 14-1 19 6c5-7 18-6 18 5 0 9-9 16-18 24zM5 13c0-5 3-7 8-7"/></svg></button>
      <button aria-label="返回"><svg viewBox="0 0 38 38"><path d="M1 24l10-9v5c12 2 21-5 26-16 1 15-10 26-26 24v5z" fill="currentColor"/></svg></button>
      <button aria-label="旗帜"><svg viewBox="0 0 38 38" fill="currentColor"><path d="M4 0h3v38H4zM9 3c8-3 12 5 25 1v18c-13 4-17-4-25-1z"/></svg></button>
      <button aria-label="火箭"><svg viewBox="0 0 38 38" fill="currentColor"><path d="M19 0c6 5 8 12 7 20l5 6v12l-6-6H13l-6 6V26l5-6c-1-8 1-15 7-20z"/><circle cx="19" cy="13" r="3" fill="#fcfbfe"/></svg></button>
      <button aria-label="奔跑"><svg viewBox="0 0 38 38" fill="currentColor"><circle cx="9" cy="5" r="3"/><path d="M10 6l10 12v20H5l8-10 3-8-9-11z"/></svg></button>
    </div>
  </aside>
</div>
</body>
</html>
```
FILE: styles.css
```css
* { box-sizing: border-box; }
body {
  margin: 0;
  background: #fff;
  color: #444;
  font-family: "Liberation Sans", "Noto Sans CJK SC", sans-serif;
  font-size: 14px;
}
button, input, select { font: inherit; color: inherit; }
button { border: 0; padding: 0; background: none; display: flex; align-items: center; justify-content: center; }
h1, h2, h3, p { margin: 0; }
.sprite { display: none; }
svg { flex: none; }

.frame {
  position: relative;
  display: flex;
  flex-direction: column;
  height: 100vh;
  margin-right: 6px;
  overflow: hidden;
  background: #fcfbfd;
  border-bottom: 1px solid #3c4660;
}
.banner {
  flex: none;
  height: 96px;
  padding: 21px 8px 0 0;
  background: #1c3850;
  border-bottom: 1px solid #6d8194;
  text-align: center;
}
.banner h1 { color: #f4f7fa; font-size: 35px; line-height: 48px; font-weight: 400; }

.tabs { flex: none; display: flex; align-items: flex-start; padding: 0 17px 0 8px; }
.tab-list { display: flex; gap: 29px; }
.tab { height: 28px; font-size: 15px; white-space: nowrap; border-bottom: 3px solid transparent; }
.tab-active { padding: 0 2px; font-weight: 700; color: #222; border-bottom-color: #c3301c; }
.tab-latin { padding: 0 6px 0 2px; font-family: "Open Sans", sans-serif; font-size: 14px; }
.tab-context { margin-left: 8px; color: #dd4a35; font-weight: 700; }
.tell-me { display: flex; align-items: center; gap: 12px; height: 26px; margin-left: 36px; }
.tell-me input { width: 44px; padding: 0; border: 0; background: none; font-size: 15px; }
.tell-me input::placeholder { color: #444; opacity: 1; }
.tab-tools { display: flex; align-items: center; gap: 10px; margin-left: auto; padding-top: 2px; }
.tool-box { width: 34px; height: 26px; border: 1px solid #dcdadd; border-radius: 2px; background: #fff; }
.tool-wide { width: 36px; margin-right: 8px; }

.ribbon { flex: none; display: flex; height: 118px; padding: 8px 0 3px; border-bottom: 1px solid #b4b2b5; }
.group { flex: none; display: flex; flex-direction: column; border-right: 1px solid #b4b6b9; }
.group-body { flex: none; display: flex; height: 83px; }
.group-foot { display: flex; align-items: flex-end; height: 23px; }
.group-foot span { flex: 1; text-align: center; line-height: 20px; }
.launcher { width: 10px; height: 10px; margin: 0 3px 2px 0; }
.caret { width: 8px; height: 8px; }
.g-clip { width: 98px; }
.g-clip .group-foot { padding-right: 1px; }
.g-slide { width: 114px; }
.g-font { width: 230px; }
.g-para { width: 183px; }
.g-draw { width: 216px; }
.g-a { width: 62px; padding-left: 12px; }
.g-b { width: 66px; align-items: center; padding-top: 4px; }
.g-c { width: 74px; align-items: center; padding-top: 4px; }
.g-d { width: 96px; align-items: center; white-space: nowrap; font-family: "Open Sans", sans-serif; font-size: 15px; }
.g-d span { line-height: 24px; }
.editing { align-items: flex-start; width: 34px; height: 40px; padding-top: 6px; border: 1px solid #c8c6c9; }

.big { flex-direction: column; justify-content: flex-start; height: 83px; padding-top: 4px; }
.big > svg:first-child { height: 34px; margin-bottom: 3px; }
.big span { height: 17px; line-height: 17px; white-space: nowrap; }
.big > .caret { margin-top: 5px; }
.big-line { display: flex; align-items: center; gap: 2px; }
.big-paste { width: 38px; margin-left: 6px; }
.big-new { width: 58px; margin-left: 9px; }
.big-shape { width: 34px; margin-left: 15px; }
.big-style { width: 60px; margin-left: 8px; }
.stack { display: flex; flex-direction: column; padding-left: 3px; }
.small { gap: 4px; height: 27px; justify-content: flex-start; }
.small > svg:first-child { width: 20px; height: 20px; }
.g-clip .stack { padding-left: 7px; }
.g-draw .stack { padding-left: 4px; }
.g-draw .group-foot { padding-right: 20px; }

.rows { flex-direction: column; padding-left: 9px; }
.row { display: flex; align-items: center; height: 27px; }
.row-gap { gap: 7px; padding-left: 2px; }
.cell { flex: none; width: 25px; height: 27px; font-size: 16px; font-family: "Open Sans", "Noto Sans CJK SC", sans-serif; }
.cell > svg:first-child { width: 20px; height: 20px; }
.cell-dd { width: 39px; gap: 4px; justify-content: flex-start; padding-left: 3px; }
.cell-dd span { font-size: 15px; }
.cell s { font-size: 14px; }
.pressed { background: #c5c2c3; }
.serif { font-family: "Liberation Serif", serif; font-weight: 700; }
.spacing { flex-direction: column; margin: 0 4px; }
.spacing span { font-size: 12px; line-height: 14px; }
.rule { width: 1px; height: 21px; background: #c8c6c9; }
.g-font .rule { margin: 0 4px; }
.g-para .row:nth-child(2) .rule { margin-left: 4px; }
.columns { margin-left: 9px; }
.last { margin-left: auto; margin-right: 13px; }
.combo { display: flex; align-items: center; height: 26px; padding: 0 5px 0 3px; border: 1px solid #c4c2c5; background: #fff; }
.combo select, .field select { flex: 1; min-width: 0; padding: 0; border: 0; background: none; appearance: none; }
.combo select { font-family: "Open Sans", "Noto Sans CJK SC", sans-serif; font-size: 14px; }
.combo-name { width: 155px; }
.combo-size { width: 57px; }

.quick { flex: none; display: flex; align-items: center; gap: 11px; height: 41px; padding-left: 3px; border-bottom: 1px solid #d2d0d3; }
.quick > span { flex: none; margin-right: -4px; line-height: 20px; }
.switch { flex: none; display: flex; align-items: center; justify-content: space-between; width: 44px; height: 18px; margin-right: 4px; padding: 0 4px 0 7px; border-radius: 9px; background: #c8321b; color: #fff; font-size: 11px; }
.switch input { width: 10px; height: 10px; margin: 0; border-radius: 50%; background: #fff; appearance: none; }
.q { flex: none; gap: 0; }
.q > svg:first-child { width: 22px; height: 20px; }
.q > .caret { width: 8px; }
.q-tight { margin-right: -5px; }

.work { flex: 1; min-height: 0; display: flex; background: #e5e3e6; }
.thumbs { flex: none; display: flex; flex-direction: column; align-items: flex-start; width: 41px; padding-top: 22px; padding-left: 3px; border-right: 1px solid #c6c4c7; }
.expand { width: 20px; height: 10px; }
.thumbs-name { margin-top: 17px; line-height: 20px; color: #333; writing-mode: vertical-rl; text-orientation: sideways; transform: rotate(180deg); }
.canvas { flex: 1; margin-bottom: 7px; padding: 12px 0 14px 56px; border-bottom: 1px solid #c6c4c7; }
.slide { width: 764px; height: 100%; background: #f9f7fa; border-bottom: 1px solid #cfcdd0; }
.hero { position: relative; display: grid; grid-template-columns: repeat(4, 159px); height: 240px; padding: 89px 0 0 58px; background: #4585c0; }
.item { display: flex; flex-direction: column; align-items: center; color: #fff; }
.item h2 { width: 78px; border-bottom: 2px solid #cfe0f0; text-align: center; font-size: 34px; line-height: 40px; }
.item h3 { margin-top: 3px; font-size: 14px; line-height: 20px; }
.item p { width: 124px; margin-top: 7px; text-align: center; font-size: 9px; line-height: 16px; }
.badge { position: relative; flex: none; display: flex; align-items: center; justify-content: center; width: 72px; height: 72px; margin-top: 17px; border: 4px solid #f9f7fa; border-radius: 50%; background: #b5b3b6; }
.badge-blue { background: #3a7bc0; }
.coin { width: 32px; height: 32px; border-radius: 50%; background: #f3f2f5; color: #a5a3a6; font-size: 28px; line-height: 32px; text-align: center; }
.handles { position: absolute; left: 2px; top: -28px; }
.pointer { position: absolute; left: 198px; top: 231px; }
.contents { display: flex; align-items: center; gap: 4px; margin: 75px 43px 0; }
.contents::before, .contents::after { content: ""; flex: 1; height: 1px; background: #b9bbbd; }
.contents strong { color: #3a7bd5; font-size: 32px; line-height: 36px; font-style: italic; }

.library { position: absolute; top: 150px; right: 0; bottom: 0; width: 408px; overflow: hidden; border-left: 1px solid #bdbbbe; background: #fcfbfe; box-shadow: 0 0 6px rgba(0, 0, 0, 0.3); }
.lib-title { display: flex; align-items: center; justify-content: space-between; height: 35px; margin-bottom: 15px; padding-left: 10px; background: #7f7d7e; color: #f0eff0; }
.lib-title h2 { font-size: 18px; font-weight: 400; }
.lib-tools { display: flex; align-items: center; gap: 10px; }
.lib-tools i { width: 1px; height: 18px; background: #a9a7a8; }
.help { font-size: 23px; }
.filters { display: flex; gap: 7px; margin: 0 0 7px 15px; }
.field { flex: none; display: flex; align-items: center; height: 30px; padding: 0 8px; border: 1px solid #c2c4c8; border-radius: 2px; background: #fff; font-size: 13px; }
.search { width: 210px; padding-right: 5px; }
.search input { flex: 1; min-width: 0; padding: 0; border: 0; background: none; }
.search input::placeholder { color: #555; opacity: 1; }
.pick { width: 101px; }
.strong { color: #222; font-weight: 700; }
.arrow { width: 12px; height: 12px; }
.icons { display: grid; grid-template-columns: repeat(6, 71px); grid-auto-rows: 71px; width: 427px; margin-left: 16px; border: solid #c9cbd0; border-width: 1px 0 0 1px; }
.icons button { position: relative; border: solid #c9cbd0; border-width: 0 1px 1px 0; color: #6f6d70; }
.icons button > svg:first-child { width: 38px; height: 38px; }
.icons .star { position: absolute; top: 4px; right: 3px; width: 18px; height: 18px; }
```
